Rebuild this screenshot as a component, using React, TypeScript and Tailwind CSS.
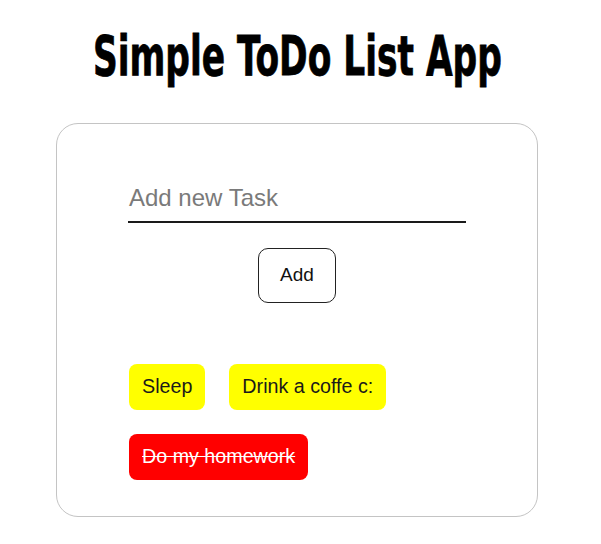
import React from "react";

export default function App() {
  const tasks = [
    { t: "Sleep", done: false },
    { t: "Drink a coffe c:", done: false },
    { t: "Do my homework", done: true },
  ];
  return (
    <div className="w-[601px] h-[544px] bg-white flex flex-col items-center pr-[7px]" style={{ fontFamily: '"Liberation Sans", Arial, sans-serif' }}>
      <h1
        className="mt-[26px] h-[60px] leading-[60px] text-[56px] font-bold text-black whitespace-nowrap scale-x-[0.683] [-webkit-text-stroke:0.8px_black]"
        style={{ fontFamily: '"DejaVu Sans Condensed", "Liberation Sans", sans-serif' }}
      >
        Simple ToDo List App
      </h1>
      <div className="mt-[37px] w-[482px] h-[394px] border border-[#c4c4c4] rounded-[22px] flex flex-col items-center pt-[58px]">
        <div className="w-[338px] h-[41px] border-b-2 border-[#1a1a1a] flex items-end pb-[9px]">
          <span className="text-[24px] leading-[28px] text-[#7a7a7a] pl-[1px]">Add new Task</span>
        </div>
        <button className="mt-[25px] w-[78px] h-[55px] border border-[#222] rounded-[10px] text-[19px] text-[#111] bg-white">
          Add
        </button>
        <div className="mt-[61px] w-[338px] pl-[1px] flex flex-wrap gap-x-[24px] gap-y-[24px]">
          {tasks.map((x) => (
            <div
              key={x.t}
              className={
                x.done
                  ? "h-[46px] px-[13px] rounded-[8px] bg-[#ff0000] text-white line-through flex items-center text-[19.7px]"
                  : "h-[46px] px-[13px] rounded-[8px] bg-[#ffff00] text-[#1a1a1a] flex items-center text-[19.7px]"
              }
            >
              {x.t}
            </div>
          ))}
        </div>
      </div>
    </div>
  );
}
